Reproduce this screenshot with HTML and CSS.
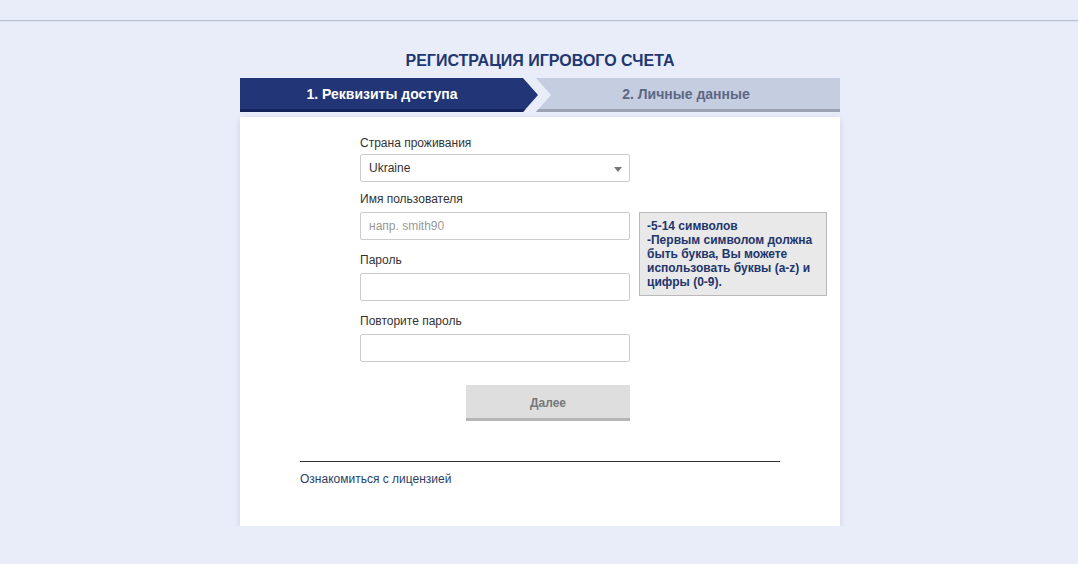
FILE: index.html
```html
<!DOCTYPE html>
<html lang="ru">
<head>
<meta charset="UTF-8">
<meta name="viewport" content="width=device-width, initial-scale=1.0">
<title>Регистрация игрового счета</title>
<link rel="stylesheet" href="styles.css">
</head>
<body>
<div class="top-line"></div>

<div class="wrapper">
  <h1 class="title">РЕГИСТРАЦИЯ ИГРОВОГО СЧЕТА</h1>

  <div class="steps">
    <div class="step step-active">1. Реквизиты доступа</div>
    <div class="step step-next">2. Личные данные</div>
  </div>

  <div class="card">
    <form class="reg-form">
      <div class="field field-select">
        <label class="field-label">Страна проживания</label>
        <div class="select-box">
          <span>Ukraine</span>
          <span class="select-arrow"></span>
        </div>
      </div>

      <div class="field field-hint">
        <label class="field-label">Имя пользователя</label>
        <div class="input-wrap">
          <input class="text-input" type="text" placeholder="напр. smith90">
          <div class="hint">
            -5-14 символов<br>
            -Первым символом должна быть буква, Вы можете использовать буквы (a-z) и цифры (0-9).
          </div>
        </div>
      </div>

      <div class="field">
        <label class="field-label">Пароль</label>
        <input class="text-input" type="password">
      </div>

      <div class="field">
        <label class="field-label">Повторите пароль</label>
        <input class="text-input" type="password">
      </div>

      <div class="form-actions">
        <button type="button" class="next-button" disabled>Далее</button>
      </div>
    </form>

    <div class="card-footer">
      <a class="license-link" href="#">Ознакомиться с лицензией</a>
    </div>
  </div>
</div>
</body>
</html>
```

FILE: styles.css
```css
body {
  margin: 0;
  padding: 0;
  background-color: #e9edfa;
  font-family: 'Liberation Sans', Arial, sans-serif;
  font-size: 12px;
  color: #333;
}
.top-line {
  height: 20px;
  border-bottom: 1px solid #b9c0cd;
  box-shadow: 0 1px 0 #dde3f2;
}
.wrapper {
  width: 600px;
  padding-left: 2px;
  margin: 0 auto;
}
.title {
  margin: 30px 0 7px;
  font-size: 16px;
  line-height: 20px;
  text-align: center;
  color: #22376f;
}
.steps {
  display: flex;
  height: 34px;
}
.step {
  display: flex;
  align-items: center;
  justify-content: center;
  font-size: 14px;
  font-weight: bold;
  box-sizing: border-box;
  padding-bottom: 2px;
}
.step-active {
  width: 298px;
  padding-right: 14px;
  background-color: #213577;
  color: #fff;
  box-shadow: inset 0 -3px 0 #14235a;
  clip-path: polygon(0 0, calc(100% - 15px) 0, 100% 50%, calc(100% - 15px) 100%, 0 100%);
}
.step-next {
  flex: 1;
  margin-left: -2px;
  padding-right: 4px;
  background-color: #c5cde0;
  color: #5c6784;
  box-shadow: inset 0 -3px 0 #9aa2b4;
  clip-path: polygon(0 0, 100% 0, 100% 100%, 0 100%, 15px 50%);
}
.card {
  margin-top: 5px;
  padding: 19px 60px 40px;
  background-color: #fff;
  box-shadow: 0 2px 6px rgba(40, 50, 90, 0.15);
}
.reg-form {
  width: 270px;
  margin-left: 60px;
}
.field {
  margin-bottom: 13px;
}
.field-select {
  margin-bottom: 10px;
}
.field-label {
  display: block;
  line-height: 14px;
  margin-bottom: 6px;
  color: #333;
}
.field-select .field-label {
  margin-bottom: 4px;
}
.select-box {
  position: relative;
  display: flex;
  align-items: center;
  height: 28px;
  padding: 0 8px;
  box-sizing: border-box;
  border: 1px solid #ccc;
  border-radius: 2px;
  color: #333;
}
.select-arrow {
  position: absolute;
  right: 7px;
  top: 12px;
  border-left: 4px solid transparent;
  border-right: 4px solid transparent;
  border-top: 5px solid #777;
}
.input-wrap {
  position: relative;
}
.text-input {
  display: block;
  width: 100%;
  height: 28px;
  padding: 0 8px;
  box-sizing: border-box;
  border: 1px solid #ccc;
  border-radius: 2px;
  font-family: inherit;
  font-size: 12px;
  color: #333;
  outline: none;
}
.text-input::placeholder {
  color: #999;
}
.hint {
  position: absolute;
  left: 279px;
  top: 0;
  width: 188px;
  height: 84px;
  box-sizing: border-box;
  padding: 6px 7px;
  background-color: #e9e9e9;
  border: 1px solid #b9b9b9;
  font-weight: bold;
  line-height: 14px;
  color: #22356b;
}
.form-actions {
  display: flex;
  justify-content: flex-end;
  margin-top: 23px;
}
.next-button {
  width: 164px;
  height: 36px;
  border: none;
  border-bottom: 3px solid #b6b6b6;
  background-color: #dedede;
  font-family: inherit;
  font-size: 12px;
  font-weight: bold;
  color: #777;
  padding: 2px 0 0;
}
.card-footer {
  margin-top: 40px;
  padding-top: 10px;
  border-top: 1px solid #333;
}
.license-link {
  display: block;
  line-height: 14px;
  color: #2d3e63;
  text-decoration: none;
}
```
